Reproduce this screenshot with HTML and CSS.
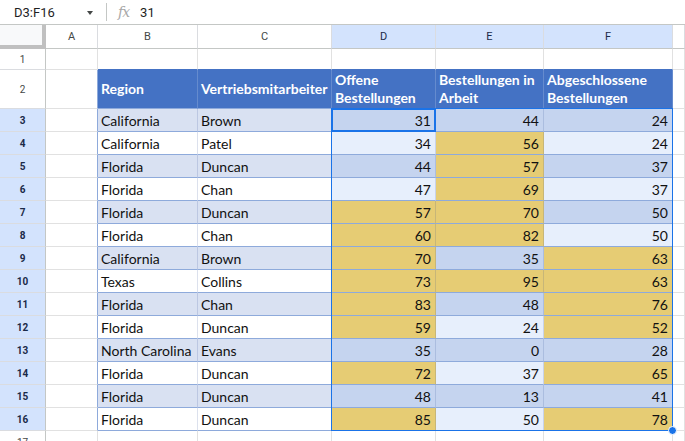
FILE: index.html
```html
<!DOCTYPE html>
<html lang="de">
<head>
    <meta charset="UTF-8">
    <title>Bestellungen</title>
    <link rel="stylesheet" href="styles.css">
</head>
<body>
    <div class="formula-bar">
        <div class="name-box">D3:F16</div>
        <span class="caret"></span>
        <span class="divider"></span>
        <span class="fx">fx</span>
        <span class="formula">31</span>
    </div>

    <div class="sheet-wrap">
        <div class="sheet" id="sheet"></div>
        <!-- selected range D3:F16 -->
        <div class="selection"><span class="fill-handle"></span></div>
        <div class="active-cell"></div>
    </div>

    <script type="text/javascript">
        var rows = [
            ['California', 'Brown', 31, 44, 24],
            ['California', 'Patel', 34, 56, 24],
            ['Florida', 'Duncan', 44, 57, 37],
            ['Florida', 'Chan', 47, 69, 37],
            ['Florida', 'Duncan', 57, 70, 50],
            ['Florida', 'Chan', 60, 82, 50],
            ['California', 'Brown', 70, 35, 63],
            ['Texas', 'Collins', 73, 95, 63],
            ['Florida', 'Chan', 83, 48, 76],
            ['Florida', 'Duncan', 59, 24, 52],
            ['North Carolina', 'Evans', 35, 0, 28],
            ['Florida', 'Duncan', 72, 37, 65],
            ['Florida', 'Duncan', 48, 13, 41],
            ['Florida', 'Duncan', 85, 50, 78]
        ];
        var headers = ['Region', 'Vertriebsmitarbeiter', 'Offene\nBestellungen',
                       'Bestellungen in\nArbeit', 'Abgeschlossene\nBestellungen'];

        var sheet = document.getElementById('sheet');

        function cell(cls, text) {
            var d = document.createElement('div');
            d.className = 'cell ' + cls;
            if (text !== undefined) d.textContent = text;
            sheet.appendChild(d);
            return d;
        }

        // column letters
        cell('corner');
        ['A', 'B', 'C', 'D', 'E', 'F'].forEach(function(l, i) {
            cell('col-head' + (i >= 3 ? ' sel' : ''), l);
        });
        cell('col-head');

        // row 1 (empty, sits above the table header)
        cell('row-head', '1');
        cell('');
        for (var c = 0; c < 5; c++) cell('above-head');
        cell('');

        // row 2: table header
        cell('row-head', '2');
        cell('table-edge');
        headers.forEach(function(h) { cell('head', h); });
        cell('');

        // rows 3-16
        rows.forEach(function(r, i) {
            var band = i % 2 === 0 ? ' band' : '';
            var last = i === rows.length - 1 ? ' last' : '';
            cell('row-head sel', String(i + 3));
            cell('table-edge');
            cell('text' + band + last, r[0]);
            cell('text' + band + last, r[1]);
            for (var j = 2; j < 5; j++) {
                cell('num' + band + (r[j] > 50 ? ' high' : ''), r[j]);
            }
            cell('');
        });

        // row 17
        cell('row-head', '17');
        for (var k = 0; k < 7; k++) cell('');
    </script>
</body>
</html>
```

FILE: styles.css
```css
body {
    margin: 0;
    background: #ffffff;
    font-family: Roboto, Arial, sans-serif;
    overflow: hidden;
}

/* top bar with name box and formula */
.formula-bar {
    display: flex;
    align-items: center;
    height: 25px;
    box-sizing: border-box;
    border-bottom: 1px solid #c4c7c5;
    color: #1f1f1f;
    font-size: 13px;
}

.name-box {
    width: 73px;
    padding-left: 14px;
}

.caret {
    width: 0;
    height: 0;
    border-left: 3.5px solid transparent;
    border-right: 3.5px solid transparent;
    border-top: 4px solid #444746;
    margin-top: 1px;
}

.divider {
    width: 1px;
    height: 18px;
    background: #c4c7c5;
    margin-left: 13px;
}

.fx {
    margin-left: 11px;
    font-family: "DejaVu Serif", serif;
    font-style: italic;
    font-size: 14px;
    color: #a8a8a8;
    letter-spacing: -1px;
}

.formula {
    margin-left: 11px;
}

/* grid */
.sheet-wrap {
    position: relative;
}

.sheet {
    display: grid;
    grid-template-columns: 46px 52px 100px 134px 104px 108px 129px 1fr;
    grid-template-rows: 24px 21px 39px repeat(14, 23px) 23px;
}

.cell {
    box-sizing: border-box;
    display: flex;
    align-items: center;
    overflow: hidden;
    white-space: nowrap;
    border-right: 1px solid #e1e1e1;
    border-bottom: 1px solid #e1e1e1;
}

.corner {
    background: #f8f9fa;
    border-right: 4px solid #c0c0c0;
    border-bottom: 4px solid #c0c0c0;
}

.col-head {
    justify-content: center;
    font-size: 11px;
    color: #444746;
    border-right-color: #dadce0;
    border-bottom-color: #c4c7c5;
}

.row-head {
    justify-content: center;
    font-size: 10px;
    color: #444746;
    border-right-color: #c4c7c5;
    border-bottom-color: #dadce0;
}

.col-head.sel {
    background: #d3e3fd;
    color: #1b2a48;
}

.row-head.sel {
    background: #d3e3fd;
    color: #1b2a48;
    font-weight: bold;
}

.above-head {
    border-bottom-color: #4472c4;
}

.table-edge {
    border-right-color: #8eaadb;
}

/* table body */
.head,
.text,
.num {
    font-family: Lato, "Liberation Sans", sans-serif;
    font-size: 14px;
    color: #111111;
    padding: 0 3px;
    border-bottom-color: #8eaadb;
    border-right-color: rgba(40, 70, 140, 0.16);
}

.head {
    background: #4472c4;
    color: #ffffff;
    font-weight: bold;
    white-space: pre-line;
    line-height: 18px;
    border-right-color: rgba(255, 255, 255, 0.18);
}

.text {
    background: #ffffff;
}

.text.band {
    background: #d9e1f2;
}

.num {
    justify-content: flex-end;
    padding-right: 4px;
    background: #e7effc;
}

.num.band {
    background: #c5d4ef;
}

.num.high {
    background: #e6cc74;
}

/* selection overlay */
.selection {
    position: absolute;
    left: 331px;
    top: 83px;
    width: 342px;
    height: 323px;
    box-sizing: border-box;
    border: 1px solid #1a73e8;
    pointer-events: none;
}

.fill-handle {
    position: absolute;
    right: -5px;
    bottom: -5px;
    width: 7px;
    height: 7px;
    border-radius: 50%;
    background: #1a73e8;
    border: 1px solid #ffffff;
}

.active-cell {
    position: absolute;
    left: 331px;
    top: 83px;
    width: 105px;
    height: 24px;
    box-sizing: border-box;
    border: 2px solid #1a73e8;
    pointer-events: none;
}
```
